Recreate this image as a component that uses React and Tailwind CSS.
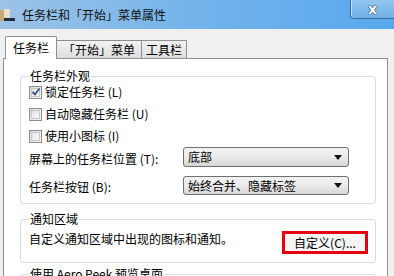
import React from "react";

const FONT = { fontFamily: '"Noto Sans CJK SC", "Noto Sans", sans-serif' };

function Checkbox({ checked }) {
  return (
    <div className="w-[13px] h-[13px] border border-[#8f8f8f] bg-gradient-to-br from-[#dcdcdc] to-[#f6f6f6] flex items-center justify-center shrink-0">
      <div className="w-[9px] h-[9px] border border-[#c8c8c8] bg-gradient-to-br from-[#e2e2e2] to-[#fafafa] flex items-center justify-center">
        {checked && (
          <svg width="10" height="10" viewBox="0 0 10 10" className="overflow-visible">
            <path d="M1.5 5 L4 7.5 L8.5 1.5" fill="none" stroke="#3b4f86" strokeWidth="1.8" />
          </svg>
        )}
      </div>
    </div>
  );
}

function CheckRow({ checked, label }) {
  return (
    <div className="flex items-center h-[22px] gap-[3px]">
      <Checkbox checked={checked} />
      <span className="text-[12px] leading-none text-black">{label}</span>
    </div>
  );
}

function Select({ value, className }) {
  return (
    <div
      className={
        "flex items-center justify-between w-[166px] rounded-[3px] border border-[#707070] bg-gradient-to-b from-[#f2f2f2] via-[#ebebeb] to-[#d6d6d6] pl-[4px] pr-[6px] " +
        className
      }
    >
      <span className="text-[12px] leading-none text-black">{value}</span>
      <svg width="8" height="5" viewBox="0 0 8 5">
        <path d="M0 0 H8 L4 5 Z" fill="#111" />
      </svg>
    </div>
  );
}

function Group({ title, className, children }) {
  return (
    <fieldset className={"border border-[#d5dfe5] rounded-[3px] px-[8px] " + className}>
      <legend className="px-[1px] text-[12px] leading-[14px] text-black">{title}</legend>
      {children}
    </fieldset>
  );
}

export default function App() {
  return (
    <div className="w-[394px] h-[276px] overflow-hidden bg-[#f0f0f0] flex flex-col" style={FONT}>
      {/* Title bar */}
      <div className="h-[29px] shrink-0 relative flex items-center bg-gradient-to-r from-[#9cc3e6] via-[#72b3ea] to-[#58a8ee]">
        <svg width="15" height="14" viewBox="0 0 15 14" className="shrink-0">
          <rect x="0" y="2" width="4" height="11" fill="#c9a878" />
          <rect x="4" y="1" width="6" height="12" fill="#e8e0cc" />
          <rect x="4" y="10" width="11" height="3" fill="#1e2d40" />
        </svg>
        <span className="ml-[7px] text-[12px] leading-none text-[#111]">任务栏和「开始」菜单属性</span>
        <div className="absolute top-0 right-0 w-[44px] h-[19px] rounded-bl-[4px] border-l border-b border-[#3a6d9c] bg-gradient-to-b from-[#93c6ee] to-[#6fb1e8] flex items-center justify-center shadow-[inset_1px_0_0_#c7e2f7]">
          <span
            className="text-[14px] font-bold leading-none text-white"
            style={{ fontFamily: '"DejaVu Sans", sans-serif', textShadow: "0 0 1px #1f3550, 0 0 1px #1f3550, 0 0 1px #1f3550" }}
          >
            x
          </span>
        </div>
      </div>

      {/* Tabs */}
      <div className="h-[29px] shrink-0 flex items-end pl-[5px] relative z-10">
        <div className="h-[23px] -mb-px bg-white border border-b-0 border-[#8e8f8f] rounded-t-[2px] px-[7px] flex items-center">
          <span className="text-[12px] leading-none text-black">任务栏</span>
        </div>
        <div className="h-[18px] bg-gradient-to-b from-[#f2f2f2] to-[#dedede] border border-b-0 border-l-0 border-[#8e8f8f] px-[6px] flex items-center">
          <span className="text-[12px] leading-none text-black">「开始」菜单</span>
        </div>
        <div className="h-[18px] bg-gradient-to-b from-[#f2f2f2] to-[#dedede] border border-b-0 border-l-0 border-[#8e8f8f] px-[4px] flex items-center">
          <span className="text-[12px] leading-none text-black">工具栏</span>
        </div>
      </div>

      {/* Panel */}
      <div className="flex-1 ml-[3px] mr-[6px] bg-white border border-[#8e8f8f] pl-[16px] pr-[11px] pt-[10px] flex flex-col">
        <Group title="任务栏外观" className="pb-[8px]">
          <div className="flex flex-col mt-[-2px]">
            <CheckRow checked label="锁定任务栏 (L)" />
            <CheckRow label="自动隐藏任务栏 (U)" />
            <CheckRow label="使用小图标 (I)" />
          </div>
          <div className="flex items-center justify-between h-[20px] mt-0">
            <span className="text-[12px] leading-none text-black mt-[3px]">屏幕上的任务栏位置 (T):</span>
            <Select value="底部" className="h-[20px] mr-[18px]" />
          </div>
          <div className="flex items-center justify-between h-[19px] mt-[9px]">
            <span className="text-[12px] leading-none text-black mt-[2px]">任务栏按钮 (B):</span>
            <Select value="始终合并、隐藏标签" className="h-[19px] mr-[18px]" />
          </div>
        </Group>

        <Group title="通知区域" className="mt-[8px] pb-[8px]">
          <div className="flex items-center justify-between">
            <span className="text-[12px] leading-none text-black mt-[-2px]">自定义通知区域中出现的图标和通知。</span>
            <div className="mt-[5px] mr-[-1px] w-[86px] h-[23px] border-[3px] border-[#e5000f] flex items-center justify-center bg-[#f4f4f4]">
              <span className="text-[12px] leading-none text-black">自定义(C)...</span>
            </div>
          </div>
        </Group>

        <Group title="使用 Aero Peek 预览桌面" className="mt-[4px] h-[30px]">
          <div />
        </Group>
      </div>
    </div>
  );
}
